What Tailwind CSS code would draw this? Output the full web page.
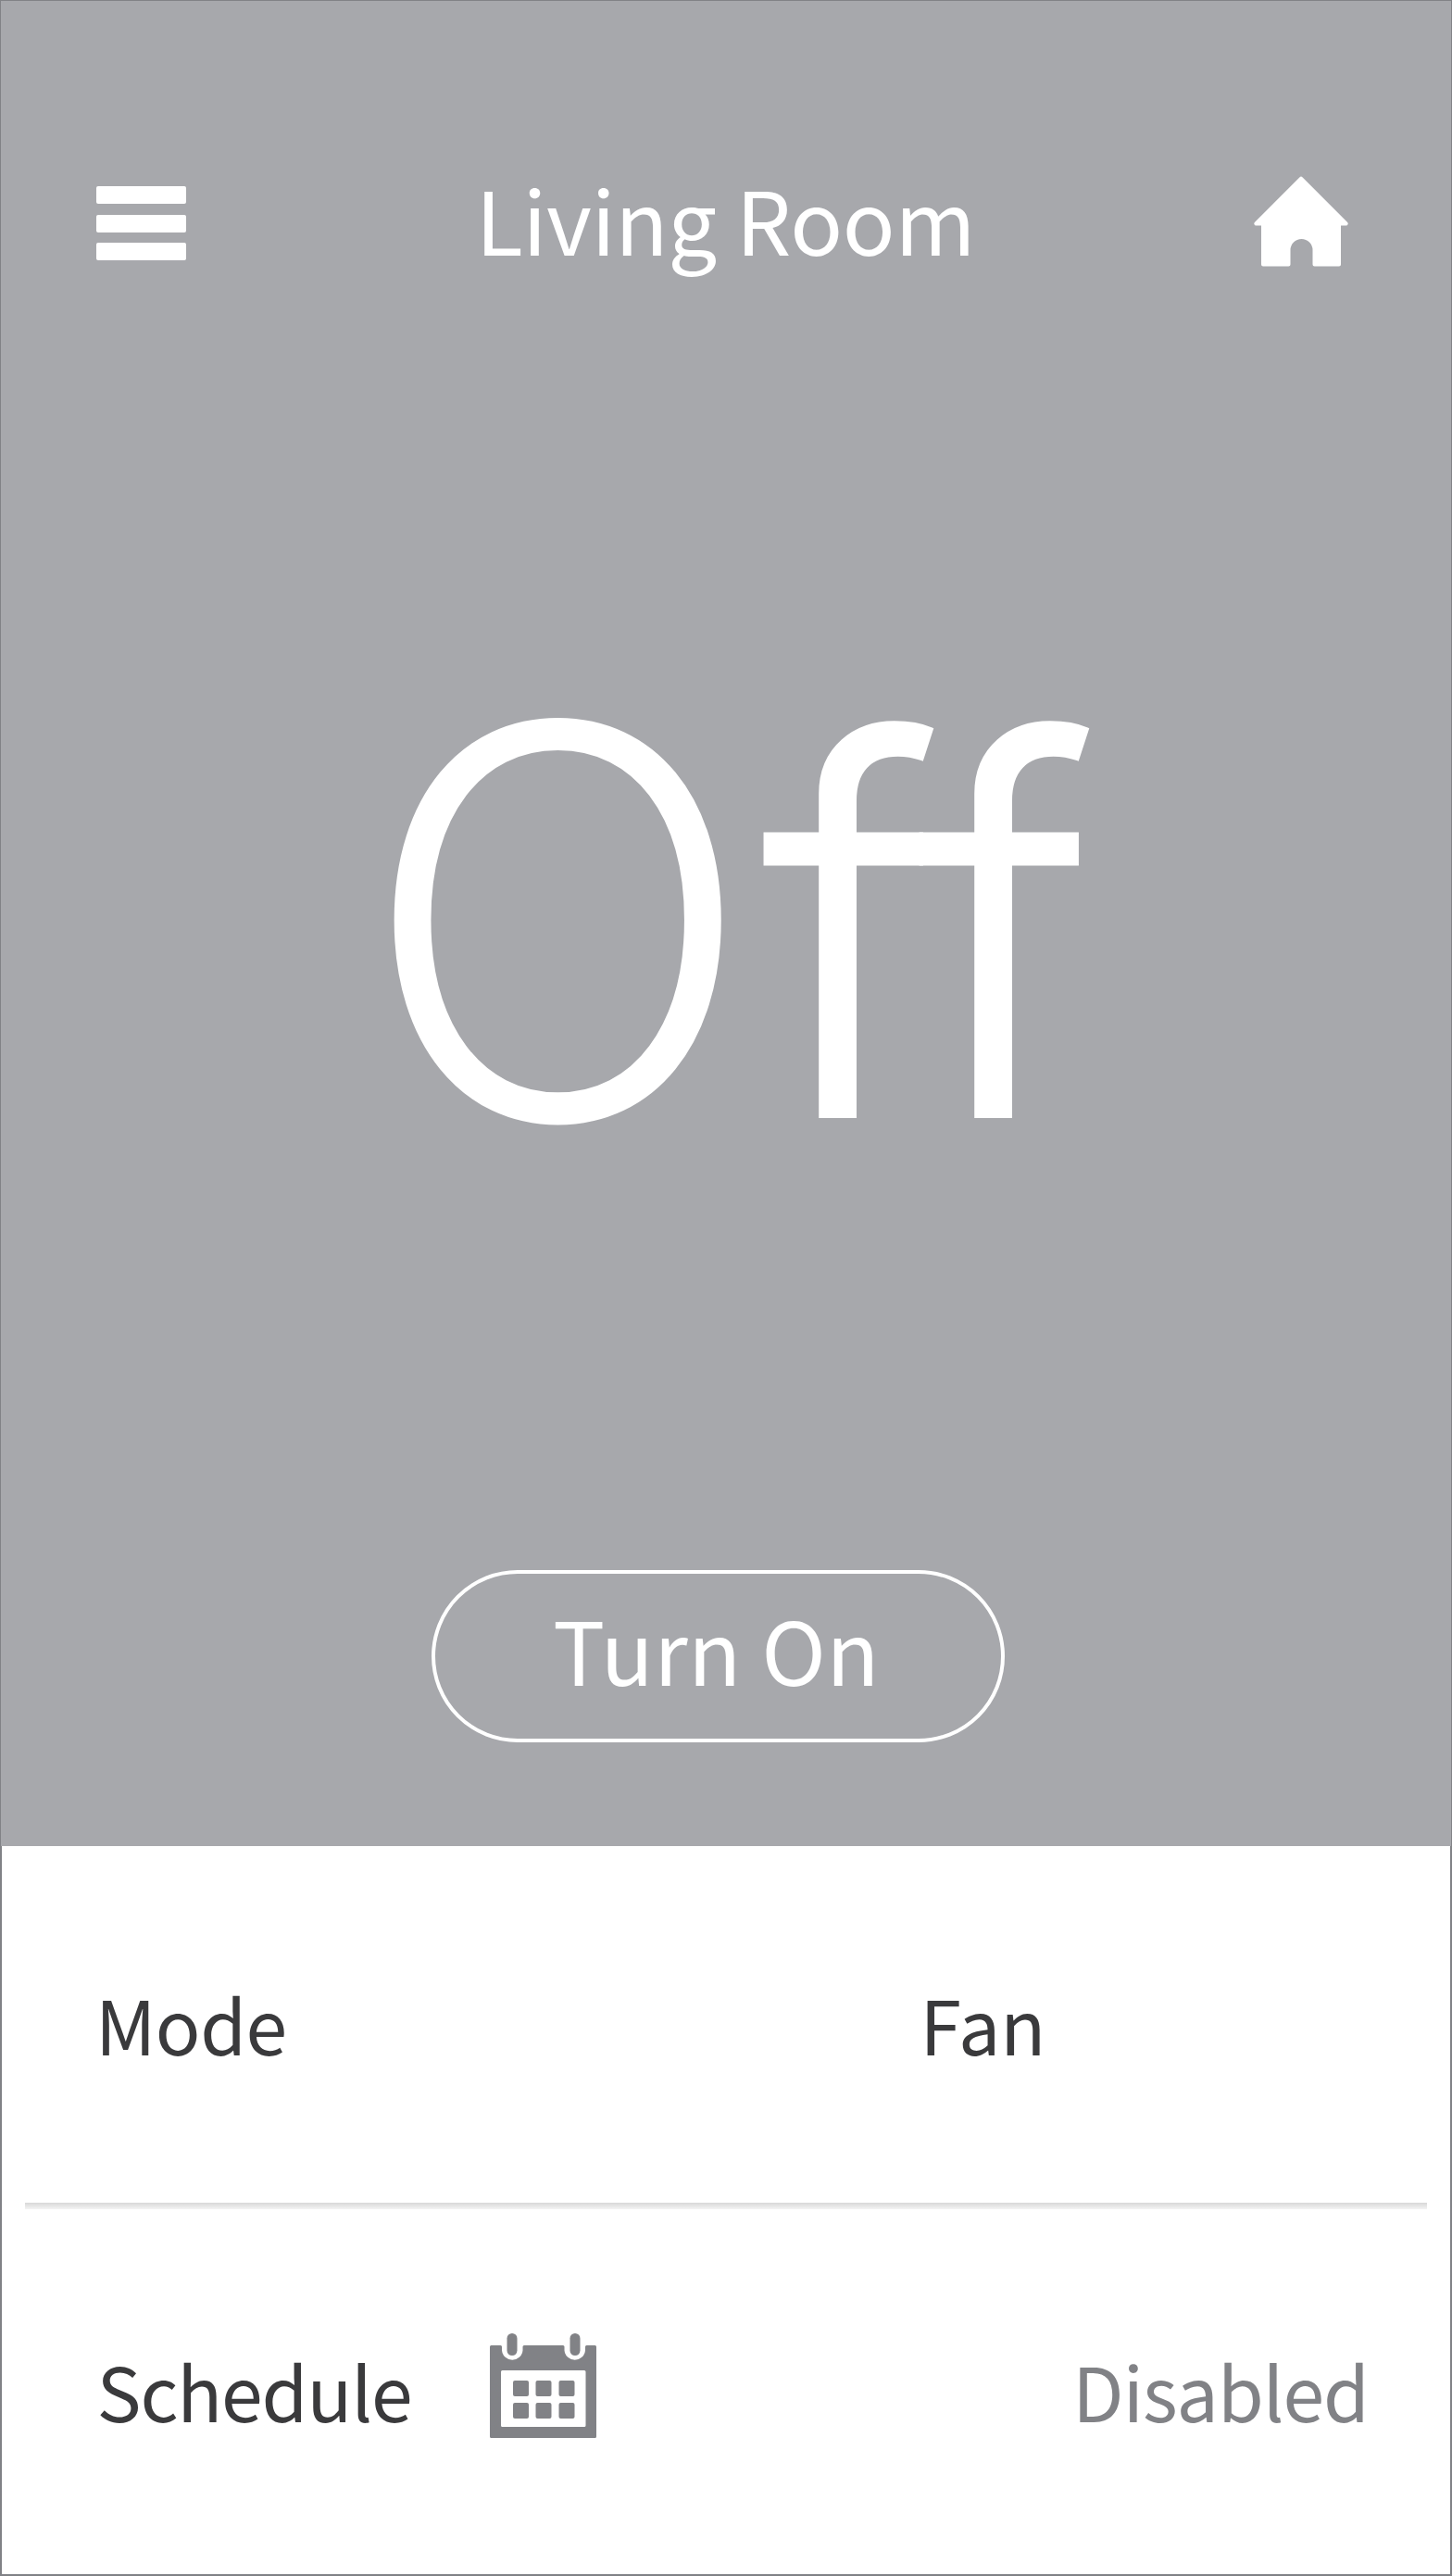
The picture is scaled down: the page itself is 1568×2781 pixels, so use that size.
<!DOCTYPE html>
<html lang="en"><head><meta charset="utf-8"><title>Living Room</title>
<script src="https://cdn.jsdelivr.net/npm/@tailwindcss/browser@4"></script></head>
<body class="font-['Noto_Sans_CJK_SC','Open_Sans',sans-serif] text-[#3a3a3c] bg-white">
<main class="flex flex-col w-[1568px] h-[2781px] border border-[#818286] overflow-hidden">
  <section class="flex flex-col h-[1992px] shrink-0 bg-[#a7a8ac] text-white">
    <header class="flex items-start justify-between pt-[189px] pl-[103px] pr-[111px] h-[300px]">
      <button class="flex flex-col gap-[11.5px] w-[97px] mt-[11px]" aria-label="Menu">
        <span class="w-full h-[19px] rounded-[2px] bg-white"></span>
        <span class="w-full h-[19px] rounded-[2px] bg-white"></span>
        <span class="w-full h-[19px] rounded-[2px] bg-white"></span>
      </button>
      <h1 class="-mt-[2px] ml-[12px] text-[94px] leading-[94px] whitespace-nowrap tracking-[-0.3px]">Living Room</h1>
      <svg class="w-[102px] h-[98px]" viewBox="0 0 102 98" fill="#fff"><path d="M49.6 1.2a2 2 0 0 1 2.8 0L100.600 49.500q1.500 1.500 1 2.500q-.5 1.500-2 1.500H94V95.500a2 2 0 0 1-2 2H65.500a2 2 0 0 1-2-2V80a12 12 0 0 0-24 0V95.500a2 2 0 0 1-2 2H10a2 2 0 0 1-2-2V53.500H2.400q-1.500 0-2-1.500q-.5-1 1-2.500Z"/></svg>
    </header>
    <p class="mt-[363px] h-[580px] pl-[392px] text-[577px] leading-[580px] font-light whitespace-nowrap flex items-baseline [-webkit-text-stroke:4px_white]"><span class="mr-[10px]">O</span><span class="font-['Inter'] text-[558px] tracking-[-8px]">ff</span></p>
    <button class="mt-[451px] ml-[465px] w-[619px] h-[186px] shrink-0 rounded-full border-4 border-white text-[94px] leading-[94px] flex items-start justify-center pt-[33px] pr-[4px]"><span class="tracking-[0.4px]">Turn On</span></button>
  </section>
  <section class="flex flex-col grow border-x border-b border-[#818286]">
    <div class="flex items-center h-[385px] pl-[101px] pb-[3px] text-[80.5px] leading-[81px]">
      <span class="w-[890.5px] tracking-[-0.5px]">Mode</span><span>Fan</span>
    </div>
    <div class="h-[7px] ml-[25px] mr-[25px] bg-linear-to-b from-[#d8d8d8] to-[#f4f4f4] shrink-0"></div>
    <div class="flex items-start pt-[134px] pl-[102.5px] pr-[88px] text-[80.5px] leading-[122px]">
      <span class="w-[424px] tracking-[-1.1px]">Schedule</span>
      <svg class="w-[115px] h-[113px]" viewBox="0 0 115 113" fill="#818286"><path fill-rule="evenodd" d="M1.500 13H11.500Q13 13 13 14.500V18.500a11.300 11.300 0 0 0 22.500 0V14.500Q35.500 13 37 13H79Q80.500 13 80.500 14.500V18.500a11.300 11.300 0 0 0 22.500 0V14.500Q103 13 104.500 13H113.500Q115 13 115 14.500V111.500Q115 113 113.500 113H1.500Q0 113 0 111.500V14.500Q0 13 1.500 13ZM13.500 40Q12 40 12 41.500V99.500Q12 101 13.500 101H102Q103.500 101 103.500 99.500V41.500Q103.500 40 102 40Z"/><rect x="18.500" y="0" width="11" height="24" rx="5.500"/><rect x="86.500" y="0" width="11" height="24" rx="5.500"/><rect x="25" y="51" width="17" height="17" rx="2"/><rect x="49.500" y="51" width="17" height="17" rx="2"/><rect x="74.500" y="51" width="17" height="17" rx="2"/><rect x="25" y="75" width="17" height="17" rx="2"/><rect x="49.500" y="75" width="17" height="17" rx="2"/><rect x="74.500" y="75" width="17" height="17" rx="2"/></svg>
      <span class="ml-auto text-[#818286] tracking-[-1px]">Disabled</span>
    </div>
  </section>
</main>
</body></html>
